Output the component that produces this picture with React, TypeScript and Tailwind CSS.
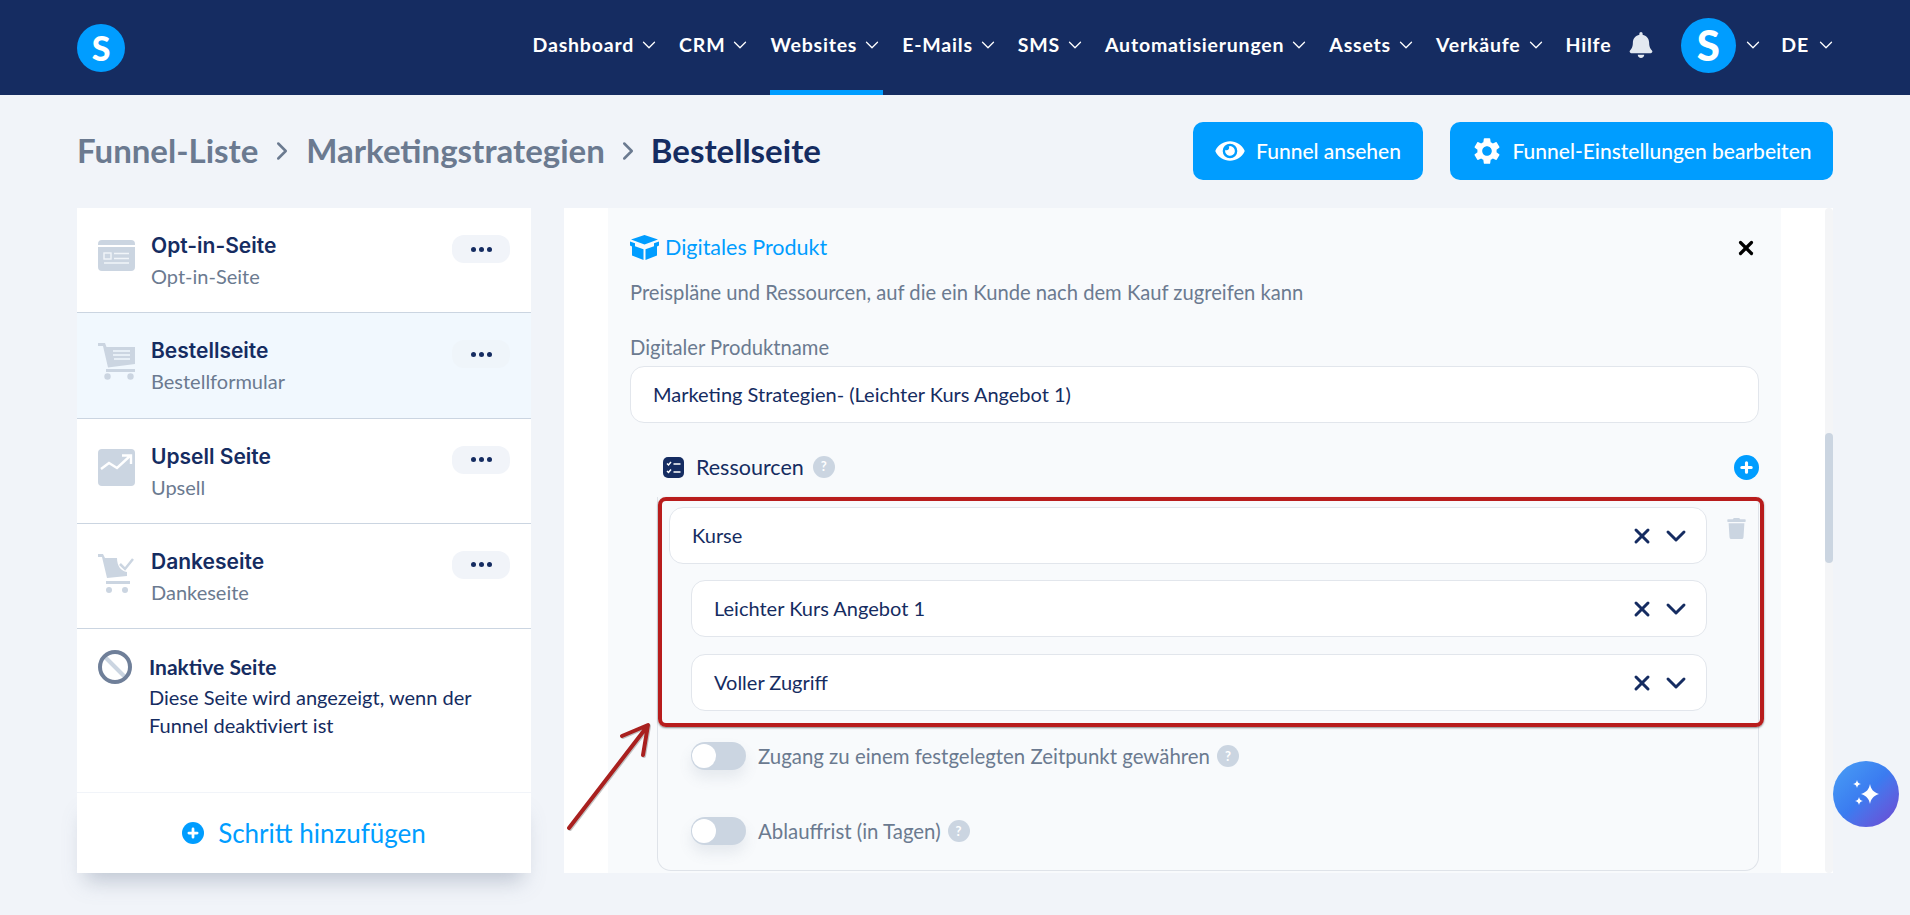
import { ChevronDown, ChevronRight, X } from 'lucide-react';
import { FaBell, FaEye, FaTrash } from 'react-icons/fa';
import { MdSettings } from 'react-icons/md';

const navItems = [
    { label: 'Dashboard' },
    { label: 'CRM' },
    { label: 'Websites', active: true },
    { label: 'E-Mails' },
    { label: 'SMS' },
    { label: 'Automatisierungen' },
    { label: 'Assets' },
    { label: 'Verkäufe' },
];

function PageIcon() {
    return (
        <svg viewBox="0 0 37 33" className="h-[33px] w-[37px]">
            <path fill="#cbd5e1" d="M0 6a4 4 0 0 1 4-4h29a4 4 0 0 1 4 4v1H0zM0 9h37v20a4 4 0 0 1-4 4H4a4 4 0 0 1-4-4z" />
            <rect x="6" y="15" width="7" height="6" fill="none" stroke="#f1f5f9" strokeWidth="1.4" />
            <path stroke="#f1f5f9" strokeWidth="1.6" d="M16 15.5h15M16 20.5h15M6 25h25" />
        </svg>
    );
}

function CartIcon() {
    return (
        <svg viewBox="0 0 37 37" className="h-[37px] w-[37px]">
            <path fill="#cbd5e1" d="M0 0h7l1.500 4H37v17L10 24.500 5 3H0z" />
            <path fill="#cbd5e1" d="M8 26h29v3H8z" />
            <circle cx="9.500" cy="33.500" r="3.200" fill="#cbd5e1" />
            <circle cx="32.500" cy="33.500" r="3.200" fill="#cbd5e1" />
            <path stroke="#f1f7fd" strokeWidth="1.400" d="M15 8h17M15 12h17M16 16h16" />
        </svg>
    );
}

function TrendIcon() {
    return (
        <svg viewBox="0 0 37 37" className="h-[37px] w-[37px]">
            <rect width="37" height="37" rx="4" fill="#cbd5e1" />
            <path fill="none" stroke="#fff" strokeWidth="2.400" d="M3 20l8-6 8 5 13-12M24 6.500h9V15" />
        </svg>
    );
}

function CartCheckIcon() {
    return (
        <svg viewBox="0 0 36 40" className="h-[40px] w-[36px]">
            <path fill="#cbd5e1" d="M0 0h5l2 4h12c0 8 4 13 10 14v4L9 24 4 3H0z" />
            <path fill="#cbd5e1" d="M8 27h24v3H8z" />
            <circle cx="11" cy="36" r="3" fill="#cbd5e1" />
            <circle cx="27" cy="36" r="3" fill="#cbd5e1" />
            <path fill="none" stroke="#cbd5e1" strokeWidth="2.500" d="M22 10l5 5 8-10" />
        </svg>
    );
}

function BanIcon() {
    return (
        <svg viewBox="0 0 34 34" className="h-[34px] w-[34px]">
            <path stroke="#cbd5e1" strokeWidth="4" d="M7 7l20 20" />
            <circle cx="17" cy="17" r="15" fill="none" stroke="#6f7f99" strokeWidth="4" />
        </svg>
    );
}

function BoxIcon() {
    return (
        <svg viewBox="0 0 29 25" className="h-[25px] w-[29px]">
            <path fill="#009dff" d="M14.500 0L28 4.500l-13.500 5L1 4.500z" />
            <path fill="#009dff" d="M0 6.500l5 1.800v3l8.500 3V25L2 20.500v-9L0 10.500zM29 6.500l-5 1.800v3l-8.500 3V25L27 20.500v-9l2-1z" />
        </svg>
    );
}

function ChecklistIcon() {
    return (
        <svg viewBox="0 0 21 21" className="h-[21px] w-[21px]">
            <rect width="21" height="21" rx="5" fill="#152c61" />
            <path fill="none" stroke="#fff" strokeWidth="1.500" d="M4 6.500l1.500 1.500L8 5M4 14l1.500 1.500L8 12.500M10.500 7h7M10.500 15h7" />
        </svg>
    );
}

function PlusCircle({ size }: { size: string }) {
    return (
        <svg viewBox="0 0 24 24" className={size}>
            <circle cx="12" cy="12" r="12" fill="#009dff" />
            <path stroke="#fff" strokeWidth="3" strokeLinecap="round" d="M12 7.500v9M7.500 12h9" />
        </svg>
    );
}

function HelpDot({ className = '' }: { className?: string }) {
    return (
        <span className={`flex h-[22px] w-[22px] items-center justify-center rounded-full bg-[#cbd5e1] text-[13px] font-bold text-white ${className}`}>?</span>
    );
}

function Toggle() {
    return (
        <span className="flex h-[28px] w-[55px] shrink-0 items-center rounded-full bg-[#cbd5e1] pl-[1px] shadow-[0_8px_14px_rgba(100,116,139,0.12)]">
            <span className="h-[24px] w-[24px] rounded-full bg-white" />
        </span>
    );
}

function SelectBox({ label, className }: { label: string; className: string }) {
    return (
        <div className={`flex h-[57px] items-center rounded-[14px] border border-[#e2e6ec] bg-white pr-[14px] pl-[22px] text-[20px] text-[#152c61] ${className}`}>
            <span className="mb-[2px] flex-1">{label}</span>
            <X className="h-[24px] w-[24px] text-[#152c61]" strokeWidth={3} />
            <ChevronDown className="ml-[6px] h-[32px] w-[32px] text-[#152c61]" strokeWidth={2.2} />
        </div>
    );
}

function FunnelStep({ icon, title, subtitle, active }: { icon: React.ReactNode; title: string; subtitle: string; active?: boolean }) {
    return (
        <div className={`flex h-[105.25px] border-b border-[#cbd5e1] pr-[21px] pl-[21px] ${active ? 'bg-[#f1f8fe]' : ''}`}>
            <div className="flex w-[53px] shrink-0 pt-[30px]">{icon}</div>
            <div className="flex-1 pt-[24px]">
                <div className="font-['Inter'] text-[21px] leading-[28px] font-semibold text-[#152c61]">{title}</div>
                <div className="mt-[4px] text-[20px] leading-[24px] text-[#6b7a90]">{subtitle}</div>
            </div>
            <div className={`mt-[27px] flex h-[28px] w-[58px] items-center justify-center gap-[3px] rounded-[12px] ${active ? 'bg-[#eff5fa]' : 'bg-[#f1f4f9]'}`}>
                <span className="h-[5px] w-[5px] rounded-full bg-[#152c61]" />
                <span className="h-[5px] w-[5px] rounded-full bg-[#152c61]" />
                <span className="h-[5px] w-[5px] rounded-full bg-[#152c61]" />
            </div>
        </div>
    );
}

export default function App() {
    return (
        <div className="h-[915px] overflow-hidden bg-[#f1f4f9] font-['Lato',sans-serif] text-[#152c61]">
            {/* Top nav */}
            <header className="flex h-[95px] items-center bg-[#152c61] pr-[73px] pl-[77px] text-white">
                <div className="flex h-[48px] w-[48px] items-center justify-center rounded-full bg-[#009dff] text-[34px] font-black">S</div>
                <nav className="ml-auto flex h-full items-center text-[19.5px] font-bold tracking-[0.8px]">
                    {navItems.map((item) => (
                        <div
                            key={item.label}
                            className={`mr-[19px] flex h-full items-center gap-[4px] border-b-[5px] ${item.active ? 'border-[#009dff]' : 'border-transparent'}`}
                        >
                            {item.label}
                            <ChevronDown className="h-[22px] w-[22px]" strokeWidth={1.4} />
                        </div>
                    ))}
                    <div className="mb-[5px] flex items-center">
                        <span>Hilfe</span>
                        <FaBell className="mr-[28px] ml-[18px] h-[26px] w-[24px] text-[#e2e8f0]" />
                        <div className="flex h-[55px] w-[55px] items-center justify-center rounded-full bg-[#009dff] text-[42px] font-black">S</div>
                        <ChevronDown className="mr-[17px] ml-[6px] h-[22px] w-[22px]" strokeWidth={1.4} />
                        <span>DE</span>
                        <ChevronDown className="ml-[6px] h-[22px] w-[22px]" strokeWidth={1.4} />
                    </div>
                </nav>
            </header>

            {/* Breadcrumb + actions */}
            <div className="flex h-[113px] items-start pr-[77px] pl-[77px]">
                <div className="flex h-[112px] flex-1 items-center text-[33px] font-bold text-[#6b7a90]">
                    <span>Funnel-Liste</span>
                    <ChevronRight className="mx-[9px] h-[30px] w-[30px]" strokeWidth={2} />
                    <span>Marketingstrategien</span>
                    <ChevronRight className="mx-[8px] h-[30px] w-[30px]" strokeWidth={2} />
                    <span className="text-[#152c61]">Bestellseite</span>
                </div>
                <button className="mt-[27px] flex h-[58px] w-[230px] items-center justify-center gap-[11px] rounded-[10px] bg-[#009dff] text-[21px] font-medium text-white">
                    <FaEye className="h-[26px] w-[30px]" />
                    Funnel ansehen
                </button>
                <button className="mt-[27px] ml-[27px] flex h-[58px] w-[383px] items-center justify-center gap-[9px] rounded-[10px] bg-[#009dff] text-[21px] font-medium text-white">
                    <MdSettings className="h-[32px] w-[32px]" />
                    Funnel-Einstellungen bearbeiten
                </button>
            </div>

            <div className="flex pr-[77px] pl-[77px]">
                {/* Funnel steps */}
                <aside className="flex h-[665px] w-[454px] flex-col bg-white">
                    <FunnelStep icon={<PageIcon />} title="Opt-in-Seite" subtitle="Opt-in-Seite" />
                    <FunnelStep icon={<CartIcon />} title="Bestellseite" subtitle="Bestellformular" active />
                    <FunnelStep icon={<TrendIcon />} title="Upsell Seite" subtitle="Upsell" />
                    <FunnelStep icon={<CartCheckIcon />} title="Dankeseite" subtitle="Dankeseite" />
                    <div className="flex flex-1 pt-[21px] pl-[21px]">
                        <BanIcon />
                        <div className="ml-[17px] pt-[4px]">
                            <div className="text-[21px] leading-[26px] font-bold text-[#152c61]">Inaktive Seite</div>
                            <p className="mt-[3px] w-[340px] text-[20px] leading-[28px] text-[#152c61]">Diese Seite wird angezeigt, wenn der Funnel deaktiviert ist</p>
                        </div>
                    </div>
                    <div className="flex h-[81px] items-center justify-center gap-[14px] border-t border-[#f1f4f9] text-[26px] text-[#009dff] shadow-[0_16px_20px_-8px_rgba(100,116,139,0.35)]">
                        <PlusCircle size="h-[22px] w-[22px]" />
                        Schritt hinzufügen
                    </div>
                </aside>

                {/* Editor panel */}
                <main className="relative ml-[33px] flex h-[665px] flex-1 bg-white pl-[44px]">
                    <div className="w-[1173px] bg-[#f8fafc] pt-[27px] pr-[22px] pl-[22px]">
                        <div className="flex h-[25px] items-center">
                            <BoxIcon />
                            <span className="ml-[6px] flex-1 text-[21.5px] text-[#009dff]">Digitales Produkt</span>
                            <X className="mr-[2px] h-[22px] w-[22px] text-black" strokeWidth={3.5} />
                        </div>
                        <p className="mt-[20px] text-[20.2px] leading-[24px] text-[#6b7a90]">Preispläne und Ressourcen, auf die ein Kunde nach dem Kauf zugreifen kann</p>
                        <label className="mt-[31px] block text-[20.2px] leading-[24px] text-[#6b7a90]">Digitaler Produktname</label>
                        <div className="mt-[7px] flex h-[57px] items-center rounded-[14px] border border-[#e2e6ec] bg-white pb-[2px] pl-[22px] text-[20px] text-[#152c61]">
                            Marketing Strategien- (Leichter Kurs Angebot 1)
                        </div>
                        <div className="mt-[31px] flex h-[26px] items-center pl-[33px]">
                            <ChecklistIcon />
                            <span className="ml-[12px] text-[21.5px] text-[#152c61]">Ressourcen</span>
                            <span className="ml-[9px] flex-1">
                                <HelpDot />
                            </span>
                            <PlusCircle size="h-[25px] w-[25px]" />
                        </div>
                        <section className="mt-[17px] ml-[27px] rounded-b-[14px] border-x border-b border-[#dfe3e9] pt-[10px] pb-[25px] pl-[11px]">
                            <div className="flex items-start">
                                <SelectBox label="Kurse" className="flex-1" />
                                <FaTrash className="mt-[11px] mr-[12px] ml-[20px] h-[21px] w-[19px] text-[#cbd5e1]" />
                            </div>
                            <SelectBox label="Leichter Kurs Angebot 1" className="mt-[16px] mr-[51px] ml-[22px]" />
                            <SelectBox label="Voller Zugriff" className="mt-[17px] mr-[51px] ml-[22px]" />
                            <div className="mt-[31px] ml-[22px] flex items-center gap-[12px] text-[20.4px] leading-[28px] text-[#6b7a90]">
                                <Toggle />
                                <span>Zugang zu einem festgelegten Zeitpunkt gewähren</span>
                                <HelpDot className="-ml-[5px]" />
                            </div>
                            <div className="mt-[47px] ml-[22px] flex items-center gap-[12px] text-[20.4px] leading-[28px] text-[#6b7a90]">
                                <Toggle />
                                <span>Ablauffrist (in Tagen)</span>
                                <HelpDot className="-ml-[5px]" />
                            </div>
                        </section>
                    </div>
                    <div className="ml-auto h-full w-[8px] rounded-full bg-[#f4f5f7] pt-[225px]">
                        <div className="h-[130px] rounded-full bg-[#cbd5e1]" />
                    </div>

                    {/* Annotation: red frame and arrow over the form */}
                    <div className="pointer-events-none absolute top-[289px] left-[94px] h-[230px] w-[1106px] rounded-[8px] border-[4px] border-[#b81c1c] shadow-[0_1px_2px_rgba(60,60,60,0.6)]" />
                    <svg className="pointer-events-none absolute top-[510px] left-[0px] h-[115px] w-[90px]" viewBox="0 0 90 115">
                        <path d="M6 111L83 11M59 19L85 8 80 38" fill="none" stroke="#8a8a8a" strokeOpacity="0.5" strokeWidth="4" strokeLinecap="round" strokeLinejoin="round" />
                        <path d="M5 110L82 10M58 18L84 7 79 37" fill="none" stroke="#a9201f" strokeWidth="4" strokeLinecap="round" strokeLinejoin="round" />
                    </svg>
                </main>
            </div>

            {/* Assistant button */}
            <div className="fixed top-[761px] left-[1833px] flex h-[66px] w-[66px] items-center justify-center rounded-full bg-gradient-to-br from-[#4a9ff5] via-[#3b7bf0] to-[#6a45d0]">
                <svg viewBox="0 0 32 32" className="h-[32px] w-[32px]">
                    <path fill="#fff" d="M20 6c1 5 3 8 9 10-6 2-8 5-9 10-1-5-3-8-9-10 6-2 8-5 9-10zM7 2c.500 2.500 1.500 3.500 4 4-2.500.500-3.500 1.500-4 4-.500-2.500-1.500-3.500-4-4 2.500-.500 3.500-1.500 4-4zM9 19c.500 2.500 1.500 3.500 4 4-2.500.500-3.500 1.500-4 4-.500-2.500-1.500-3.500-4-4 2.500-.500 3.500-1.500 4-4z" />
                </svg>
            </div>
        </div>
    );
}
